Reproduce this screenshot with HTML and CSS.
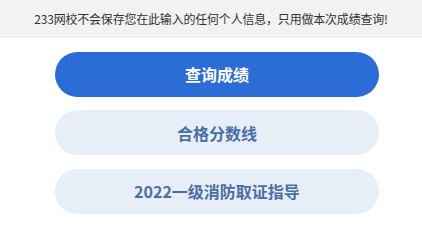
FILE: index.html
```html
<!DOCTYPE html>
<html lang="zh-CN">
<head>
<meta charset="utf-8">
<link rel="stylesheet" href="styles.css">
</head>
<body>
<div class="notice">233网校不会保存您在此输入的任何个人信息，只用做本次成绩查询!</div>
<div class="actions">
  <button class="btn btn-primary">查询成绩</button>
  <button class="btn btn-light">合格分数线</button>
  <button class="btn btn-light">2022一级消防取证指导</button>
</div>
</body>
</html>
```
FILE: styles.css
```css
html, body {
  margin: 0;
  padding: 0;
  background: #fff;
  font-family: "Microsoft YaHei", "Noto Sans CJK SC", "Noto Sans", sans-serif;
}
.notice {
  height: 38px;
  line-height: 38px;
  background: #f2f2f2;
  color: #333;
  font-size: 12px;
  letter-spacing: -0.2px;
  text-align: center;
}
.actions {
  display: flex;
  flex-direction: column;
  gap: 13.5px;
  padding: 13.5px 43px 0 55px;
}
.btn {
  height: 45px;
  border: none;
  border-radius: 23px;
  font-family: inherit;
  font-size: 16px;
  font-weight: bold;
  cursor: pointer;
  padding: 0;
}
.btn-primary {
  background: #2c6cd6;
  color: #fff;
}
.btn-light {
  background: #e7eef8;
  color: #4a6ea6;
}
```
